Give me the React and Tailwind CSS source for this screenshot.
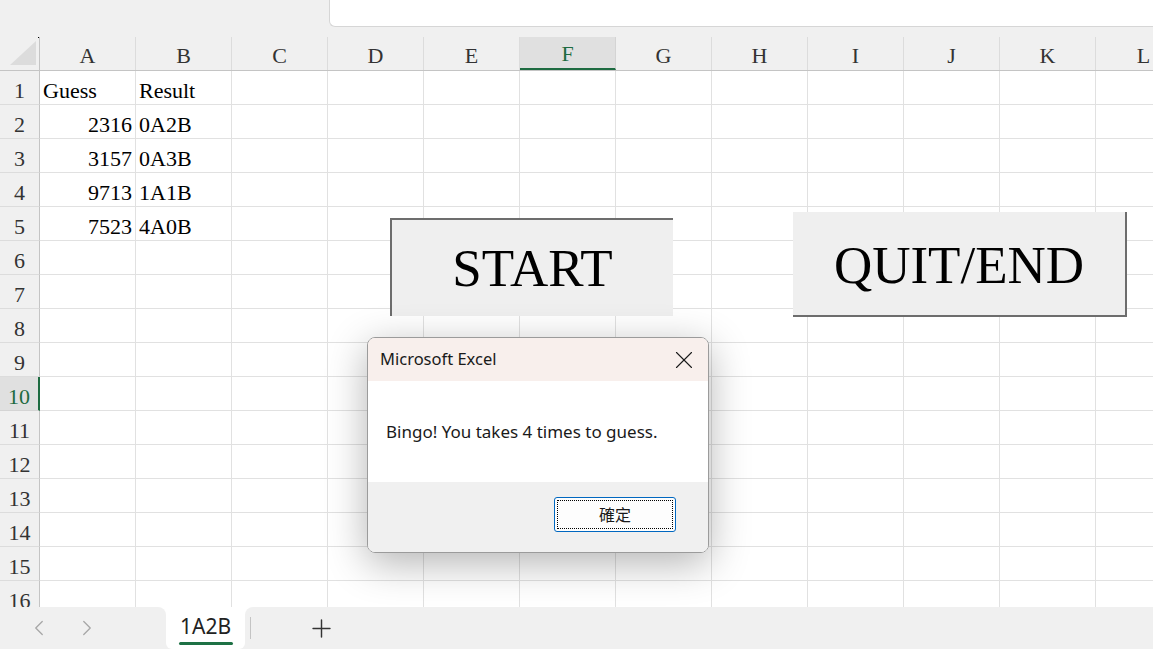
import { ChevronLeft, ChevronRight, Plus, X } from 'lucide-react';

const columns = ['A', 'B', 'C', 'D', 'E', 'F', 'G', 'H', 'I', 'J', 'K', 'L'];

// sheet contents: row number -> { col: [text, align] }
const cells = {
  1: { A: ['Guess', 'left'], B: ['Result', 'left'] },
  2: { A: ['2316', 'right'], B: ['0A2B', 'left'] },
  3: { A: ['3157', 'right'], B: ['0A3B', 'left'] },
  4: { A: ['9713', 'right'], B: ['1A1B', 'left'] },
  5: { A: ['7523', 'right'], B: ['4A0B', 'left'] },
};

const rows = Array.from({ length: 16 }, (_, i) => i + 1);

const serif = "font-['Liberation_Serif','Times_New_Roman',serif]";
const sans = "font-['Noto_Sans','Noto_Sans_CJK_TC',sans-serif]";

const ColumnHeader = ({ label }) => {
  const selected = label === 'F';
  return (
    <div
      className={
        selected
          ? 'w-[96px] shrink-0 h-full flex items-end justify-center pb-[1px] bg-[#e0e0e0] border-r border-[#d4d4d4] border-b-2 border-b-[#1e6b41] text-[#1e6b41] leading-[26px]'
          : 'w-[96px] shrink-0 h-full flex items-end justify-center pb-[1px] border-r border-[#dcdcdc] text-[#333] leading-[26px]'
      }
    >
      {label}
    </div>
  );
};

const Row = ({ n }) => {
  const selected = n === 10;
  return (
    <div className="flex h-[34px] shrink-0">
      <div
        className={
          selected
            ? 'w-[40px] shrink-0 h-full flex items-end justify-center bg-[#e0e0e0] border-b border-[#d4d4d4] border-r-2 border-r-[#1e6b41] text-[#1e6b41] leading-[26px]'
            : 'w-[40px] shrink-0 h-full flex items-end justify-center bg-[#f0f0f0] border-b border-[#dcdcdc] border-r border-r-[#c4c4c4] text-[#333] leading-[26px]'
        }
      >
        {n}
      </div>
      {columns.map((c) => {
        const cell = cells[n]?.[c];
        return (
          <div
            key={c}
            className={
              cell && cell[1] === 'right'
                ? 'w-[96px] shrink-0 h-full flex items-end justify-end px-[3px] border-r border-b border-[#e1e1e1] text-black leading-[26px] whitespace-nowrap'
                : 'w-[96px] shrink-0 h-full flex items-end justify-start px-[3px] border-r border-b border-[#e1e1e1] text-black leading-[26px] whitespace-nowrap'
            }
          >
            {cell ? cell[0] : ''}
          </div>
        );
      })}
    </div>
  );
};

export default function App() {
  return (
    <div className="relative w-[1153px] h-[649px] overflow-hidden bg-white flex flex-col select-none">
      {/* formula bar strip */}
      <div className="h-[37px] shrink-0 flex bg-[#f0f0f0]">
        <div className="w-[329px] shrink-0" />
        <div className="flex-1 h-[27px] bg-white border-l border-b border-[#d6d6d6] rounded-bl-[6px]" />
      </div>

      {/* column headers */}
      <div className={`h-[34px] shrink-0 flex bg-[#f0f0f0] border-b border-[#c4c4c4] text-[22px] ${serif}`}>
        <div className="relative w-[40px] shrink-0 h-full border-r border-[#c4c4c4]">
          <svg width="40" height="34" viewBox="0 0 40 34" className="block">
            <polygon points="10,28 36,4 36,28" fill="#dcdcdc" />
          </svg>
          <span className="absolute right-0 top-0 w-[1px] h-[1px] bg-black" />
        </div>
        {columns.map((c) => (
          <ColumnHeader key={c} label={c} />
        ))}
      </div>

      {/* grid */}
      <div className={`flex-1 overflow-hidden flex flex-col text-[22px] ${serif}`}>
        {rows.map((n) => (
          <Row key={n} n={n} />
        ))}
      </div>

      {/* sheet tabs */}
      <div className={`h-[42px] shrink-0 flex bg-white ${sans}`}>
        <div className="w-[166px] shrink-0 bg-[#f0f0f0] rounded-tr-[8px] flex items-center pl-[26px] gap-[22px] text-[#a6a6a6]">
          <ChevronLeft size={26} strokeWidth={1.2} />
          <ChevronRight size={26} strokeWidth={1.2} />
        </div>
        <div className="w-[79px] shrink-0 bg-[#f0f0f0]">
          <div className="h-full bg-white rounded-b-[6px] flex flex-col items-center pt-[6px]">
            <span className="text-[21px] leading-[26px] text-[#222]">1A2B</span>
            <span className="mt-[3px] w-[54px] h-[3px] bg-[#1e7145] rounded-full" />
          </div>
        </div>
        <div className="flex-1 bg-[#f0f0f0] rounded-tl-[8px] flex items-center">
          <span className="ml-[5px] w-px h-[22px] bg-[#c4c4c4]" />
          <Plus size={29} strokeWidth={1.2} className="ml-[56px] text-[#333]" />
        </div>
      </div>

      {/* START button (pressed) */}
      <div
        className={`absolute left-[390px] top-[218px] w-[283px] h-[98px] flex items-center justify-center bg-[#efefef] border-t-2 border-l-2 border-[#6d6d6d] text-[53px] leading-none text-black ${serif}`}
      >
        START
      </div>

      {/* QUIT/END button (raised) */}
      <div
        className={`absolute left-[793px] top-[212px] w-[334px] h-[105px] flex items-center justify-center pt-[4px] bg-[#efefef] border-r-2 border-b-2 border-[#6d6d6d] text-[53px] leading-none text-black ${serif}`}
      >
        QUIT/END
      </div>

      {/* message box */}
      <div
        className={`absolute left-[367px] top-[337px] w-[342px] h-[216px] flex flex-col rounded-[8px] border border-[#9b9b9b] overflow-hidden shadow-[0_10px_40px_rgba(0,0,0,0.3)] text-[#1a1a1a] ${sans}`}
      >
        <div className="h-[43px] shrink-0 bg-[#f8efec] flex items-center justify-between pl-[12px] pr-[9px]">
          <span className="text-[16.5px]">Microsoft Excel</span>
          <X size={30} strokeWidth={0.9} className="text-[#1a1a1a]" />
        </div>
        <div className="h-[101px] shrink-0 bg-white flex items-center pl-[18px]">
          <span className="text-[17px]">Bingo! You takes 4 times to guess.</span>
        </div>
        <div className="flex-1 bg-[#f0f0f0] flex justify-end items-start pt-[15px] pr-[32px]">
          <button className="w-[122px] h-[35px] bg-[#fdfdfd] border border-[#0067c0] rounded-[3px] outline-1 outline-dotted outline-black outline-offset-[-4px] text-[16px] text-[#1a1a1a]">
            確定
          </button>
        </div>
      </div>
    </div>
  );
}
